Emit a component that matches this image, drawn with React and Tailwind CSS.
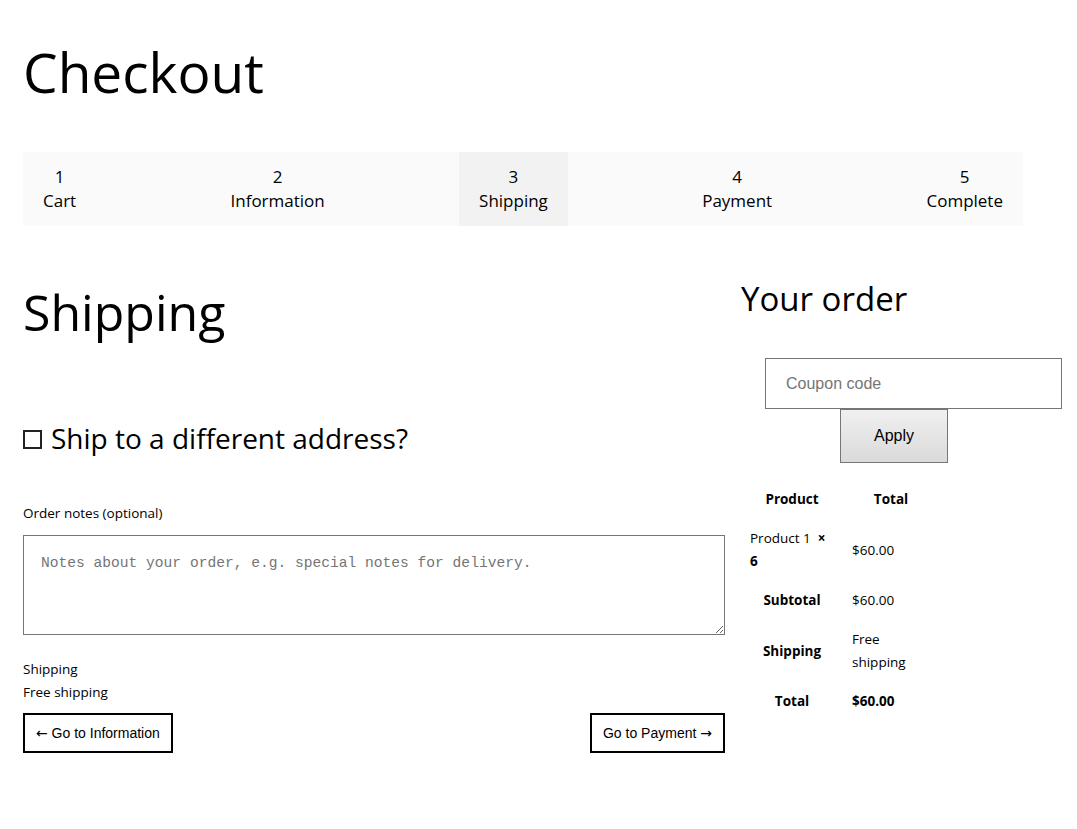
import React from 'react';

const steps = [
  { n: 1, label: 'Cart' },
  { n: 2, label: 'Information' },
  { n: 3, label: 'Shipping', active: true },
  { n: 4, label: 'Payment' },
  { n: 5, label: 'Complete' },
];

const sans = { fontFamily: '"Open Sans", "Noto Sans", sans-serif' };
const arial = { fontFamily: '"Liberation Sans", Arial, sans-serif' };
const arrow = { fontFamily: '"DejaVu Sans", sans-serif' };

export default function App() {
  return (
    <div className="min-h-[829px] bg-white text-black pl-[23px]" style={sans}>
      <h1 className="pt-[34px] text-[55px] leading-[76px] font-normal">Checkout</h1>

      {/* step bar */}
      <div className="mt-[42px] w-[1000px] h-[74px] bg-[#fafafa] flex justify-between">
        {steps.map((s) => (
          <div
            key={s.n}
            className={`px-5 flex flex-col items-center justify-center text-[17px] leading-[24px] ${s.active ? 'bg-[#f2f2f2]' : ''}`}
          >
            <span>{s.n}</span>
            <span>{s.label}</span>
          </div>
        ))}
      </div>

      <div className="flex gap-4 mt-[52px]">
        {/* left column */}
        <div className="w-[702px]">
          <h2 className="text-[50px] leading-[68px] font-normal">Shipping</h2>

          <label className="mt-[74px] flex items-center gap-[9px] text-[28px] leading-[36px]">
            <span className="w-[19px] h-[19px] border-2 border-[#222] bg-white shrink-0 mt-[3px]" />
            <span>Ship to a different address?</span>
          </label>

          <div className="mt-[47px] text-[13.5px] leading-[20px]">Order notes (optional)</div>
          <textarea
            className="mt-[12px] block w-[702px] h-[100px] border border-[#767676] px-[17px] pt-[17px] pb-[10px] text-[14.6px] leading-[20px] placeholder:text-[#757575] outline-none"
            style={{ fontFamily: '"Liberation Mono", monospace' }}
            placeholder="Notes about your order, e.g. special notes for delivery."
          />

          <div className="mt-[23px] text-[13.5px] leading-[23px]">
            <div>Shipping</div>
            <div>Free shipping</div>
          </div>

          <div className="mt-[9px] flex justify-between" style={arial}>
            <button className="h-[40px] px-[11px] border-2 border-black text-[14px] bg-white">
              <span style={arrow}>←</span> Go to Information
            </button>
            <button className="h-[40px] px-[11px] border-2 border-black text-[14px] bg-white">
              Go to Payment <span style={arrow}>→</span>
            </button>
          </div>
        </div>

        {/* right column */}
        <div className="w-[321px]">
          <h3 className="-mt-[2px] text-[33px] leading-[46px] font-normal">Your order</h3>

          <div className="mt-[36px] ml-[24px]" style={arial}>
            <input
              className="block w-[297px] h-[51px] border border-[#767676] px-[20px] text-[16px] placeholder:text-[#757575] outline-none"
              placeholder="Coupon code"
            />
            <button className="block ml-[75px] w-[108px] h-[54px] border border-[#767676] bg-gradient-to-b from-[#f0f0f0] to-[#dadada] text-[16px] text-black">
              Apply
            </button>
          </div>

          <table className="mt-[17px] text-[13.5px] leading-[23px] border-separate border-spacing-0">
            <thead>
              <tr>
                <th className="w-[102px] px-[9px] py-[8px] font-bold">Product</th>
                <th className="w-[96px] px-[9px] py-[8px] font-bold">Total</th>
              </tr>
            </thead>
            <tbody>
              <tr>
                <td className="px-[9px] py-[8px]">
                  Product 1&nbsp; <strong>×</strong>
                  <br />
                  <strong>6</strong>
                </td>
                <td className="px-[9px] py-[8px]">$60.00</td>
              </tr>
              <tr>
                <th className="px-[9px] py-[8px] font-bold">Subtotal</th>
                <td className="px-[9px] py-[8px]">$60.00</td>
              </tr>
              <tr>
                <th className="px-[9px] py-[8px] font-bold">Shipping</th>
                <td className="px-[9px] py-[8px]">
                  Free
                  <br />
                  shipping
                </td>
              </tr>
              <tr>
                <th className="px-[9px] py-[8px] font-bold">Total</th>
                <td className="px-[9px] py-[8px] font-bold">$60.00</td>
              </tr>
            </tbody>
          </table>
        </div>
      </div>
    </div>
  );
}
